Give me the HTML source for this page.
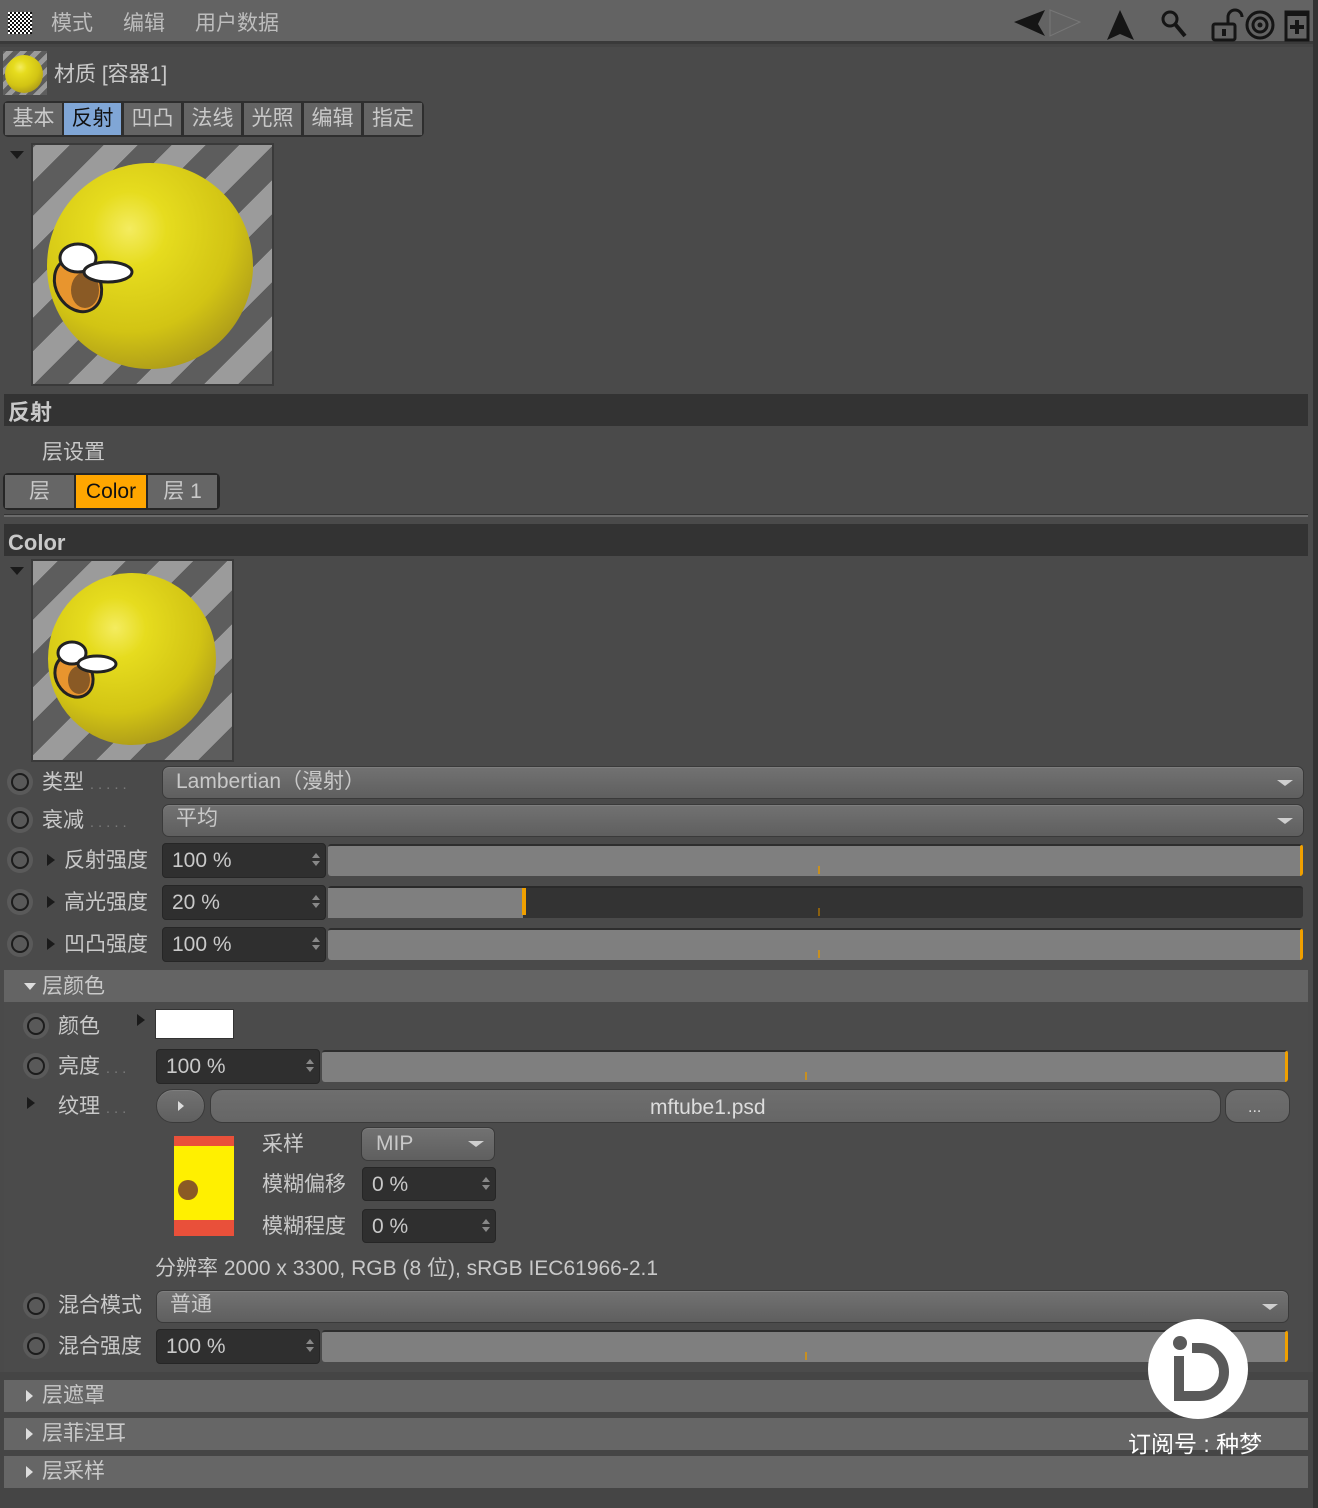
<!DOCTYPE html>
<html><head><meta charset="utf-8">
<style>
*{margin:0;padding:0;box-sizing:border-box}
body{width:1318px;height:1508px;background:#454545;font-family:"Liberation Sans","Noto Sans CJK SC",sans-serif;color:#c9c9c9;font-size:21px;position:relative;overflow:hidden}
.a{position:absolute}
.t{position:absolute;white-space:nowrap;line-height:1}
.dots{color:#7a7a7a;letter-spacing:4px;font-size:15px}
.menu{left:0;top:0;width:1318px;height:44px;background:#636363;border-bottom:3px solid #3a3a3a}
.hdr{background:#333;left:4px;width:1304px;height:32px}
.hdr span{position:absolute;left:4px;top:3px;line-height:32px;font-weight:bold;font-size:22px;color:#c9c9c9}
.circ{position:absolute;width:26px;height:26px;border-radius:50%;background:#5a5a5a;}
.circ::after{content:"";position:absolute;left:4px;top:4px;width:18px;height:18px;border-radius:50%;border:2px solid #1c1c1c;box-sizing:border-box;background:#595959}
.dd{position:absolute;background:linear-gradient(#727272,#5f5f5f);border-radius:7px;border:1px solid #3a3a3a;box-shadow:inset 0 1px 0 #7e7e7e}
.dd::after{content:"";position:absolute;right:10px;top:13px;border-left:8px solid transparent;border-right:8px solid transparent;border-top:6px solid #cfcfcf}
.btn{position:absolute;background:linear-gradient(#727272,#5f5f5f);border:1px solid #3a3a3a;box-shadow:inset 0 1px 0 #7e7e7e}
.fld{position:absolute;background:#2f2f2f;border:1px solid #262626;border-radius:4px}
.fld .sp{position:absolute;right:5px;top:9px;width:0;height:0;border-left:4px solid transparent;border-right:4px solid transparent;border-bottom:5px solid #888}
.fld .sp2{position:absolute;right:5px;top:17px;width:0;height:0;border-left:4px solid transparent;border-right:4px solid transparent;border-top:5px solid #888}
.sl{position:absolute;background:#7f7f7f;border-radius:3px;border-top:2px solid #2e2e2e}
.tri{position:absolute;width:0;height:0;border-top:6px solid transparent;border-bottom:6px solid transparent;border-left:8px solid #1a1a1a}
.trid{position:absolute;width:0;height:0;border-left:7px solid transparent;border-right:7px solid transparent;border-top:8px solid #1a1a1a}
.prev{position:absolute;background:repeating-linear-gradient(-45deg,#5d5d5d 0 24px,#9b9b9b 24px 48px);border:2px solid #3a3a3a}
.ball{position:absolute;border-radius:50%;background:radial-gradient(circle at 40% 32%,#f4ec60 0,#e6dc1e 20%,#d2c414 55%,#a8961a 82%,#8a4a20 100%)}
.tab{position:absolute;top:0;height:32px;line-height:32px;background:#646464;text-align:center}
.coll{position:absolute;left:4px;width:1304px;height:32px;background:#666}
.coll span{position:absolute;left:38px;top:0;line-height:32px}
.coll i{position:absolute;left:22px;top:10px;width:0;height:0;border-top:6px solid transparent;border-bottom:6px solid transparent;border-left:7px solid #ddd}
</style></head><body>
<div class="a menu"></div>
<svg class="a" style="left:8px;top:12px" width="24" height="22"><defs><pattern id="ck" width="4" height="4" patternUnits="userSpaceOnUse"><rect width="2" height="2" fill="#fff"/><rect x="2" y="2" width="2" height="2" fill="#fff"/><rect x="2" width="2" height="2" fill="#111"/><rect y="2" width="2" height="2" fill="#111"/></pattern></defs><rect width="24" height="22" fill="url(#ck)"/></svg>
<div class="t" style="left:51px;top:13px;color:#bdbdbd">模式</div>
<div class="t" style="left:123px;top:13px;color:#bdbdbd">编辑</div>
<div class="t" style="left:195px;top:13px;color:#bdbdbd">用户数据</div>
<svg class="a" style="left:1010px;top:6px" width="300" height="36">
<polygon points="4,16 35,4 28,18 35,30" fill="#151515"/>
<polygon points="40,4 70,16 40,30" fill="none" stroke="#777" stroke-width="1"/>
<polygon points="110,4 97,34 110,28 124,34" fill="#151515"/>
<circle cx="160" cy="13" r="7" fill="none" stroke="#151515" stroke-width="3"/><line x1="165" y1="18" x2="175" y2="30" stroke="#151515" stroke-width="4"/>
<path d="M218 18 v-7 a7 7 0 0 1 14 0" fill="none" stroke="#151515" stroke-width="3"/><rect x="203" y="18" width="22" height="16" rx="2" fill="none" stroke="#151515" stroke-width="3"/><rect x="212" y="23" width="4" height="7" fill="#151515"/>
<circle cx="250" cy="19" r="13" fill="none" stroke="#151515" stroke-width="3"/><circle cx="250" cy="19" r="7" fill="none" stroke="#151515" stroke-width="3"/><circle cx="250" cy="19" r="2.5" fill="#151515"/>
<rect x="276" y="6" width="22" height="28" fill="none" stroke="#151515" stroke-width="3"/><rect x="276" y="6" width="22" height="4" fill="#151515"/><rect x="285" y="14" width="4" height="14" fill="#151515"/><rect x="280" y="19" width="14" height="4" fill="#151515"/>
</svg>
<div class="a" style="left:1313px;top:0;width:5px;height:1508px;background:#333"></div>
<div class="a" style="left:0;top:47px;width:1313px;height:1325px;background:#4a4a4a"></div>
<div class="prev" style="left:3px;top:51px;width:44px;height:44px;background:repeating-linear-gradient(-45deg,#5d5d5d 0 5px,#9b9b9b 5px 10px);border:none"></div>
<div class="ball" style="left:5px;top:55px;width:38px;height:38px"></div>
<div class="t" style="left:54px;top:64px">材质 [容器1]</div>
<div class="a" style="left:3px;top:101px;width:421px;height:36px;background:#2e2e2e;border-radius:5px"></div>
<div class="a" style="left:5px;top:103px;height:32px">
<div class="tab" style="left:0;width:57px">基本</div>
<div class="tab" style="left:59px;width:57px;background:#80a6d6;color:#111">反射</div>
<div class="tab" style="left:119px;width:57px">凹凸</div>
<div class="tab" style="left:179px;width:57px">法线</div>
<div class="tab" style="left:239px;width:57px">光照</div>
<div class="tab" style="left:299px;width:57px">编辑</div>
<div class="tab" style="left:359px;width:58px">指定</div>
</div>
<div class="trid" style="left:10px;top:151px"></div>
<div class="prev" style="left:31px;top:143px;width:243px;height:243px"></div>
<div class="ball" style="left:47px;top:163px;width:206px;height:206px"></div>
<svg class="a" style="left:50px;top:240px" width="90" height="80"><ellipse cx="28" cy="45" rx="22" ry="28" fill="#e8952e" stroke="#222" stroke-width="3" transform="rotate(-30 28 45)"/><ellipse cx="35" cy="50" rx="14" ry="18" fill="#8a5a25"/><ellipse cx="28" cy="18" rx="18" ry="14" fill="#fff" stroke="#222" stroke-width="3"/><ellipse cx="58" cy="32" rx="24" ry="10" fill="#fff" stroke="#222" stroke-width="3"/></svg>
<div class="a hdr" style="top:394px"><span>反射</span></div>
<div class="t" style="left:42px;top:442px">层设置</div>
<div class="a" style="left:3px;top:473px;width:217px;height:37px;background:#262626;border-radius:5px"></div>
<div class="a" style="left:5px;top:475px;width:69px;height:33px;line-height:33px;background:#666;text-align:center">层</div>
<div class="a" style="left:76px;top:475px;width:70px;height:33px;line-height:33px;background:#ffa600;color:#111;text-align:center">Color</div>
<div class="a" style="left:148px;top:475px;width:69px;height:33px;line-height:33px;background:#666;text-align:center">层 1</div>
<div class="a" style="left:4px;top:514px;width:1304px;height:3px;background:#6a6a6a;border-top:1px solid #333"></div>
<div class="a hdr" style="top:524px"><span>Color</span></div>
<div class="trid" style="left:10px;top:567px"></div>
<div class="prev" style="left:31px;top:559px;width:203px;height:203px"></div>
<div class="ball" style="left:48px;top:573px;width:168px;height:172px"></div>
<svg class="a" style="left:50px;top:636px" width="70" height="70"><ellipse cx="24" cy="40" rx="18" ry="22" fill="#e8952e" stroke="#222" stroke-width="3" transform="rotate(-30 24 40)"/><ellipse cx="29" cy="44" rx="11" ry="14" fill="#8a5a25"/><ellipse cx="22" cy="17" rx="14" ry="11" fill="#fff" stroke="#222" stroke-width="3"/><ellipse cx="47" cy="28" rx="19" ry="8" fill="#fff" stroke="#222" stroke-width="3"/></svg>

<div class="circ" style="left:7px;top:769px"></div>
<div class="t" style="left:42px;top:772px">类型 <span class="dots">.....</span></div>
<div class="dd" style="left:162px;top:766px;width:1142px;height:33px"></div>
<div class="t" style="left:176px;top:771px">Lambertian（漫射）</div>
<div class="circ" style="left:7px;top:807px"></div>
<div class="t" style="left:42px;top:810px">衰减 <span class="dots">.....</span></div>
<div class="dd" style="left:162px;top:804px;width:1142px;height:33px"></div>
<div class="t" style="left:176px;top:808px">平均</div>

<div class="circ" style="left:7px;top:847px"></div><div class="tri" style="left:47px;top:854px"></div>
<div class="t" style="left:64px;top:850px">反射强度</div>
<div class="fld" style="left:162px;top:843px;width:164px;height:35px"><span class="sp"></span><span class="sp2"></span></div>
<div class="t" style="left:172px;top:850px">100 %</div>
<div class="sl" style="left:328px;top:844px;width:975px;height:32px;border-right:3px solid #f0a000"></div>

<div class="circ" style="left:7px;top:889px"></div><div class="tri" style="left:47px;top:896px"></div>
<div class="t" style="left:64px;top:892px">高光强度</div>
<div class="fld" style="left:162px;top:885px;width:164px;height:35px"><span class="sp"></span><span class="sp2"></span></div>
<div class="t" style="left:172px;top:892px">20 %</div>
<div class="a" style="left:328px;top:886px;width:975px;height:32px;background:#333;border-radius:3px;border-top:2px solid #2a2a2a"></div>
<div class="a" style="left:328px;top:888px;width:195px;height:30px;background:#7f7f7f"></div>
<div class="a" style="left:522px;top:888px;width:4px;height:27px;background:#f0a000"></div>

<div class="circ" style="left:7px;top:931px"></div><div class="tri" style="left:47px;top:938px"></div>
<div class="t" style="left:64px;top:934px">凹凸强度</div>
<div class="fld" style="left:162px;top:927px;width:164px;height:35px"><span class="sp"></span><span class="sp2"></span></div>
<div class="t" style="left:172px;top:934px">100 %</div>
<div class="sl" style="left:328px;top:928px;width:975px;height:32px;border-right:3px solid #f0a000"></div>
<div class="a" style="left:818px;top:866px;width:2px;height:8px;background:#c89020"></div>
<div class="a" style="left:818px;top:908px;width:2px;height:8px;background:#8a6010"></div>
<div class="a" style="left:818px;top:950px;width:2px;height:8px;background:#c89020"></div>

<div class="a" style="left:4px;top:970px;width:1304px;height:32px;background:#646464"></div>
<div class="trid" style="left:24px;top:983px;border-top-color:#ddd;border-width:7px 6px 0 6px"></div>
<div class="t" style="left:42px;top:976px">层颜色</div>
<div class="a" style="left:4px;top:1002px;width:1304px;height:370px;background:#4b4b4b"></div>
<div class="circ" style="left:23px;top:1013px"></div>
<div class="t" style="left:58px;top:1016px">颜色</div>
<div class="tri" style="left:137px;top:1014px"></div>
<div class="a" style="left:155px;top:1009px;width:79px;height:30px;background:#fff;border:1px solid #333"></div>

<div class="circ" style="left:23px;top:1053px"></div>
<div class="t" style="left:58px;top:1056px">亮度 <span class="dots">...</span></div>
<div class="fld" style="left:156px;top:1049px;width:164px;height:35px"><span class="sp"></span><span class="sp2"></span></div>
<div class="t" style="left:166px;top:1056px">100 %</div>
<div class="sl" style="left:322px;top:1050px;width:966px;height:32px;border-right:3px solid #f0a000"></div>
<div class="a" style="left:805px;top:1072px;width:2px;height:8px;background:#c89020"></div>

<div class="tri" style="left:27px;top:1097px"></div>
<div class="t" style="left:58px;top:1096px">纹理 <span class="dots">...</span></div>
<div class="btn" style="left:156px;top:1089px;width:49px;height:34px;border-radius:17px"></div>
<svg class="a" style="left:177px;top:1100px" width="8" height="12"><polygon points="1,1 7,6 1,11" fill="#ddd"/></svg>
<div class="a" style="left:210px;top:1089px;width:1011px;height:34px;background:linear-gradient(#6e6e6e,#666);border:1px solid #3a3a3a;border-radius:12px"></div>
<div class="t" style="left:650px;top:1097px;color:#ddd">mftube1.psd</div>
<div class="a" style="left:1225px;top:1089px;width:65px;height:34px;background:linear-gradient(#6e6e6e,#666);border:1px solid #3a3a3a;border-radius:12px"></div>
<div class="t" style="left:1248px;top:1100px;color:#ddd;font-size:16px">...</div>

<div class="a" style="left:174px;top:1136px;width:60px;height:100px;background:#fff000;border-top:10px solid #e9503a;border-bottom:16px solid #e9503a"></div>
<div class="a" style="left:178px;top:1180px;width:20px;height:20px;border-radius:50%;background:#8a5a25"></div>
<div class="t" style="left:262px;top:1134px">采样</div>
<div class="dd" style="left:361px;top:1127px;width:134px;height:34px"></div>
<div class="t" style="left:376px;top:1133px">MIP</div>
<div class="t" style="left:262px;top:1174px">模糊偏移</div>
<div class="fld" style="left:362px;top:1167px;width:134px;height:34px"><span class="sp"></span><span class="sp2"></span></div>
<div class="t" style="left:372px;top:1174px">0 %</div>
<div class="t" style="left:262px;top:1216px">模糊程度</div>
<div class="fld" style="left:362px;top:1209px;width:134px;height:34px"><span class="sp"></span><span class="sp2"></span></div>
<div class="t" style="left:372px;top:1216px">0 %</div>
<div class="t" style="left:155px;top:1258px">分辨率 2000 x 3300, RGB (8 位), sRGB IEC61966-2.1</div>

<div class="circ" style="left:23px;top:1293px"></div>
<div class="t" style="left:58px;top:1295px">混合模式</div>
<div class="dd" style="left:156px;top:1290px;width:1133px;height:33px"></div>
<div class="t" style="left:170px;top:1294px">普通</div>
<div class="circ" style="left:23px;top:1333px"></div>
<div class="t" style="left:58px;top:1336px">混合强度</div>
<div class="fld" style="left:156px;top:1329px;width:164px;height:35px"><span class="sp"></span><span class="sp2"></span></div>
<div class="t" style="left:166px;top:1336px">100 %</div>
<div class="sl" style="left:322px;top:1330px;width:966px;height:32px;border-right:3px solid #f0a000"></div>
<div class="a" style="left:805px;top:1352px;width:2px;height:8px;background:#c89020"></div>

<div class="coll" style="top:1380px"><i></i><span>层遮罩</span></div>
<div class="coll" style="top:1418px"><i></i><span>层菲涅耳</span></div>
<div class="coll" style="top:1456px"><i></i><span>层采样</span></div>

<div class="a" style="left:1148px;top:1319px;width:100px;height:100px;border-radius:50%;background:#fff"></div>
<svg class="a" style="left:1148px;top:1319px" width="100" height="100"><circle cx="32" cy="24" r="7" fill="#5a5a5a"/><path d="M31 37 V77 H52 A24 24 0 0 0 52 29 H44" fill="none" stroke="#5a5a5a" stroke-width="10"/></svg>
<div class="t" style="left:1128px;top:1433px;color:#fff;font-size:23px">订阅号 : 种梦</div>
</body></html>
